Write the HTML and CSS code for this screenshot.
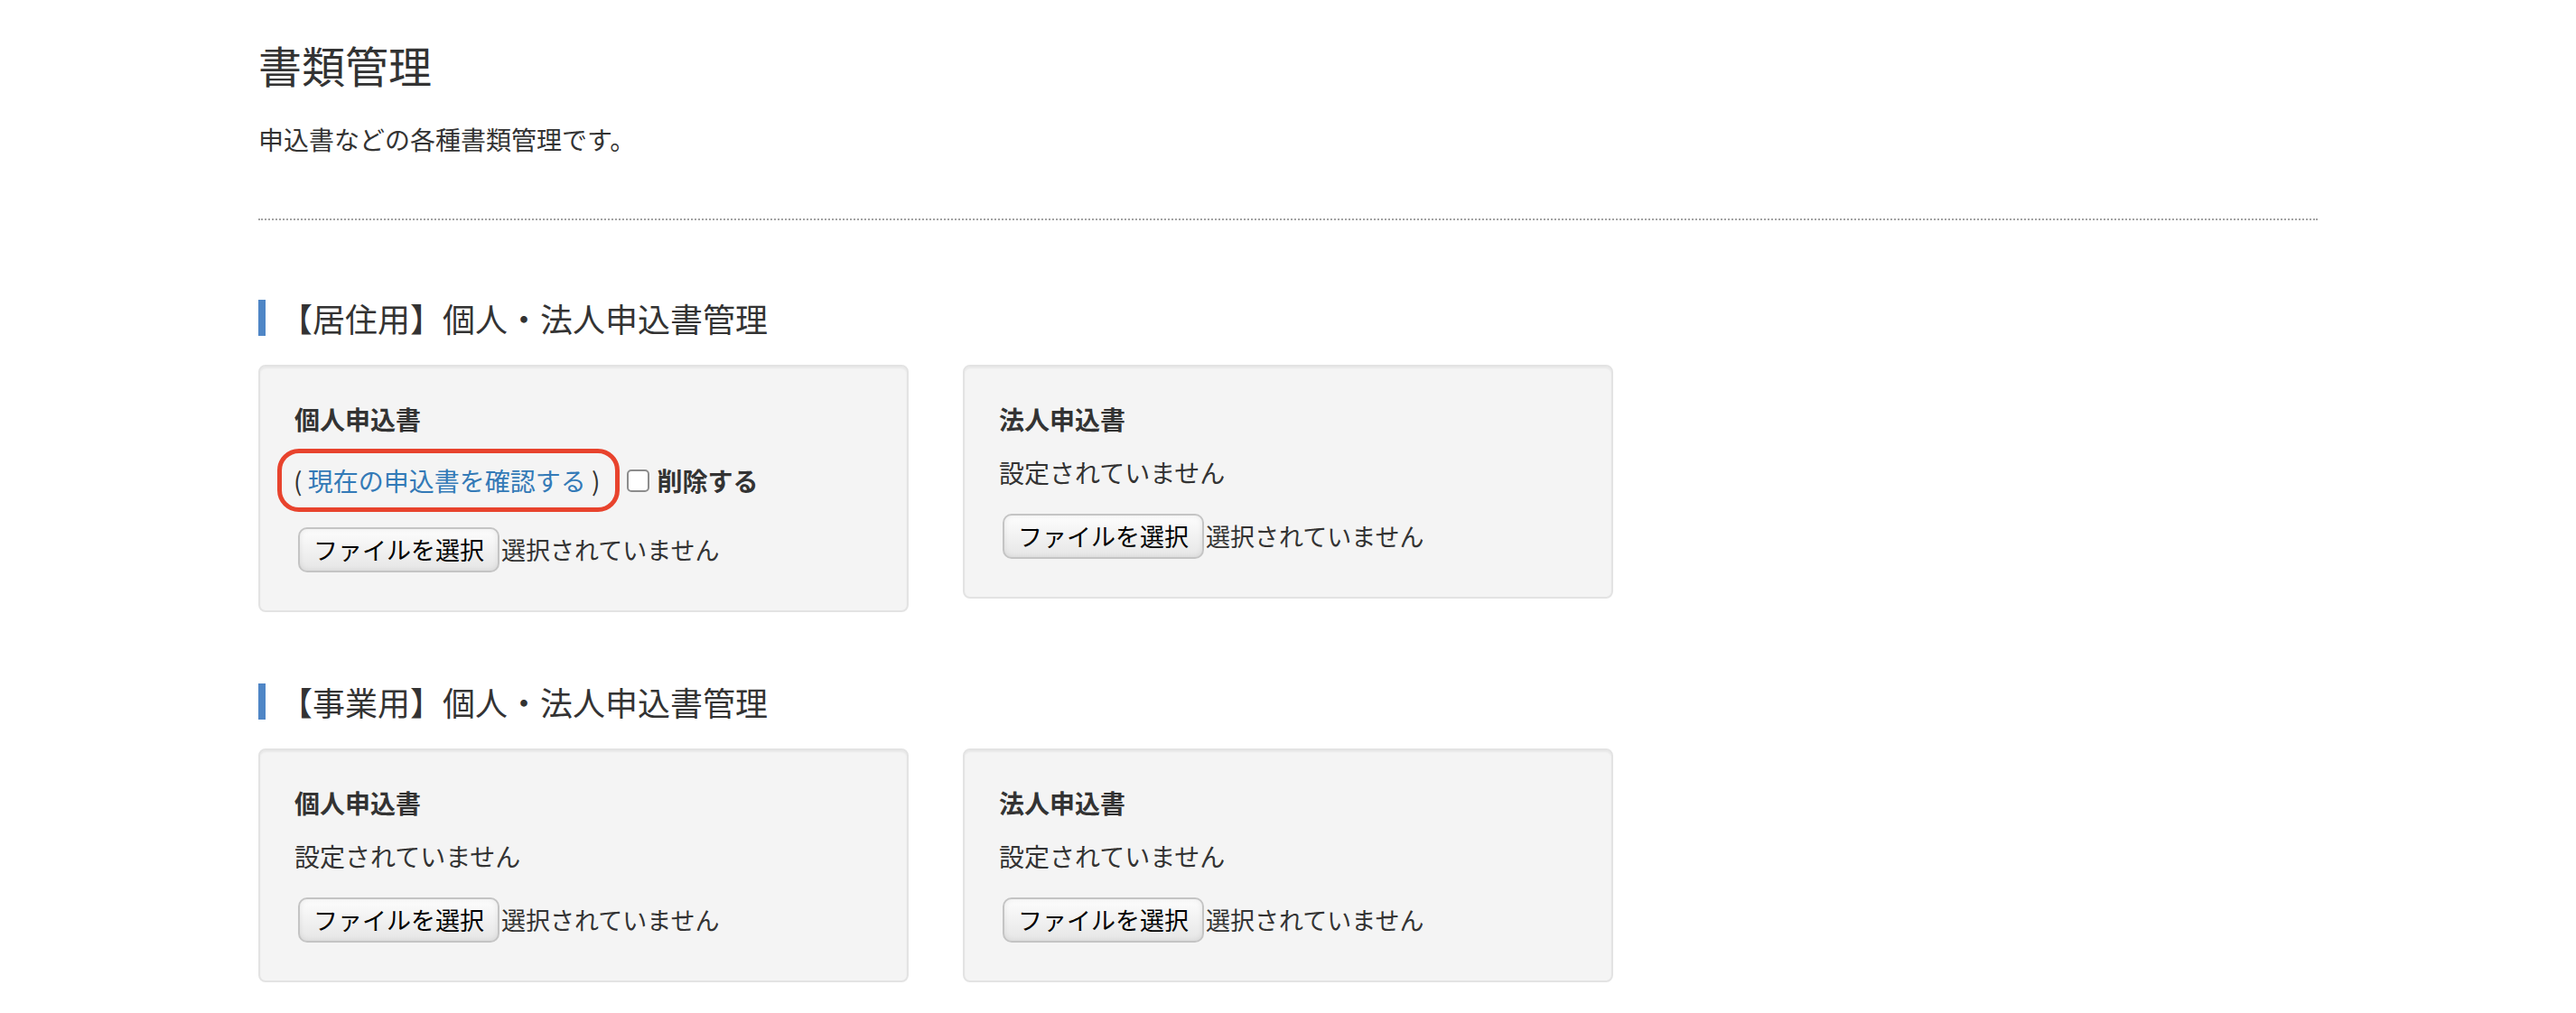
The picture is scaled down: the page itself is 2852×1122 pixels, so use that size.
FILE: index.html
```html
<!DOCTYPE html>
<html>
<head>
    <meta charset="utf-8">
    <meta name="viewport" content="width=device-width, initial-scale=1">
    <title>書類管理</title>
    <link rel="stylesheet" href="styles.css">
</head>
<body>
    <div class="container">
        <div class="page-header">
            <h1>書類管理</h1>
            <p>申込書などの各種書類管理です。</p>
        </div>

        <section class="doc-section">
            <h3 class="section-title">【居住用】個人・法人申込書管理</h3>
            <div class="well-row">
                <div class="well">
                    <label class="well-label">個人申込書</label>
                    <div class="current-row">
                        <span class="highlight">( <a href="#">現在の申込書を確認する</a> )</span>
                        <label class="delete"><input type="checkbox" class="check">削除する</label>
                    </div>
                    <div class="file-row file-row-tight">
                        <span class="file-btn">ファイルを選択</span><span class="file-status">選択されていません</span>
                    </div>
                </div>
                <div class="well">
                    <label class="well-label">法人申込書</label>
                    <p class="status">設定されていません</p>
                    <div class="file-row">
                        <span class="file-btn">ファイルを選択</span><span class="file-status">選択されていません</span>
                    </div>
                </div>
            </div>
        </section>

        <section class="doc-section">
            <h3 class="section-title">【事業用】個人・法人申込書管理</h3>
            <div class="well-row">
                <div class="well">
                    <label class="well-label">個人申込書</label>
                    <p class="status">設定されていません</p>
                    <div class="file-row">
                        <span class="file-btn">ファイルを選択</span><span class="file-status">選択されていません</span>
                    </div>
                </div>
                <div class="well">
                    <label class="well-label">法人申込書</label>
                    <p class="status">設定されていません</p>
                    <div class="file-row">
                        <span class="file-btn">ファイルを選択</span><span class="file-status">選択されていません</span>
                    </div>
                </div>
            </div>
        </section>
    </div>
</body>
</html>
```
FILE: styles.css
```css
body {
    font-family: "Noto Sans CJK JP", "Noto Sans", sans-serif;
    font-size: 28px;
    line-height: 40px;
    color: #333;
    background-color: #fff;
    margin: 0;
}
.container {
    width: 2280px;
    margin: 0 auto;
}
.page-header {
    padding: 45px 0 68px;
    border-bottom: 2px dotted #a3a3a3;
    margin-bottom: 88px;
}
.page-header h1 {
    font-size: 48px;
    line-height: 53px;
    font-weight: 400;
    margin: 0;
}
.page-header p {
    margin: 36px 0 0;
}
.doc-section {
    margin-top: 79px;
}
.section-title {
    font-size: 36px;
    line-height: 40px;
    font-weight: 400;
    margin: 0 0 32px;
    padding-left: 16px;
    border-left: 8px solid #4f86c6;
}
.well-row {
    display: flex;
    align-items: flex-start;
    gap: 60px;
}
.well {
    box-sizing: border-box;
    width: 720px;
    padding: 38px;
    background-color: #f4f4f4;
    border: 2px solid #e3e3e3;
    border-radius: 8px;
    box-shadow: inset 0 2px 2px rgba(0, 0, 0, 0.05);
}
.well-label {
    display: block;
    font-weight: 700;
    margin-bottom: 13px;
}
.status {
    margin: 0;
    padding-top: 6px;
}
.current-row {
    display: flex;
    align-items: center;
    height: 70px;
}
.highlight {
    box-sizing: border-box;
    height: 70px;
    display: flex;
    align-items: center;
    margin-left: -19px;
    padding: 0 16px 0 13px;
    border: 5px solid #e8432d;
    border-radius: 24px;
    white-space: pre;
}
.highlight a {
    color: #337ab7;
    text-decoration: none;
}
.delete {
    display: flex;
    align-items: center;
    font-weight: 700;
    margin-left: 8px;
}
.check {
    appearance: none;
    box-sizing: border-box;
    width: 25px;
    height: 25px;
    margin: 0 9px 0 0;
    background-color: #fff;
    border: 2px solid #8c8c8c;
    border-radius: 5px;
}
.file-row {
    display: flex;
    align-items: flex-start;
    margin-top: 26px;
    height: 54px;
}
.file-row-tight {
    margin-top: 17px;
}
.file-btn {
    box-sizing: border-box;
    height: 50px;
    margin-left: 4px;
    padding: 0 15px;
    display: flex;
    align-items: center;
    font-size: 27px;
    color: #000;
    background: linear-gradient(#fdfdfd, #e6e6e6);
    border: 2px solid #c4c4c4;
    border-radius: 10px;
    box-shadow: inset 0 0 6px rgba(0, 0, 0, 0.08);
}
.file-status {
    font-size: 27px;
    line-height: 50px;
    margin-left: 2px;
}
```
